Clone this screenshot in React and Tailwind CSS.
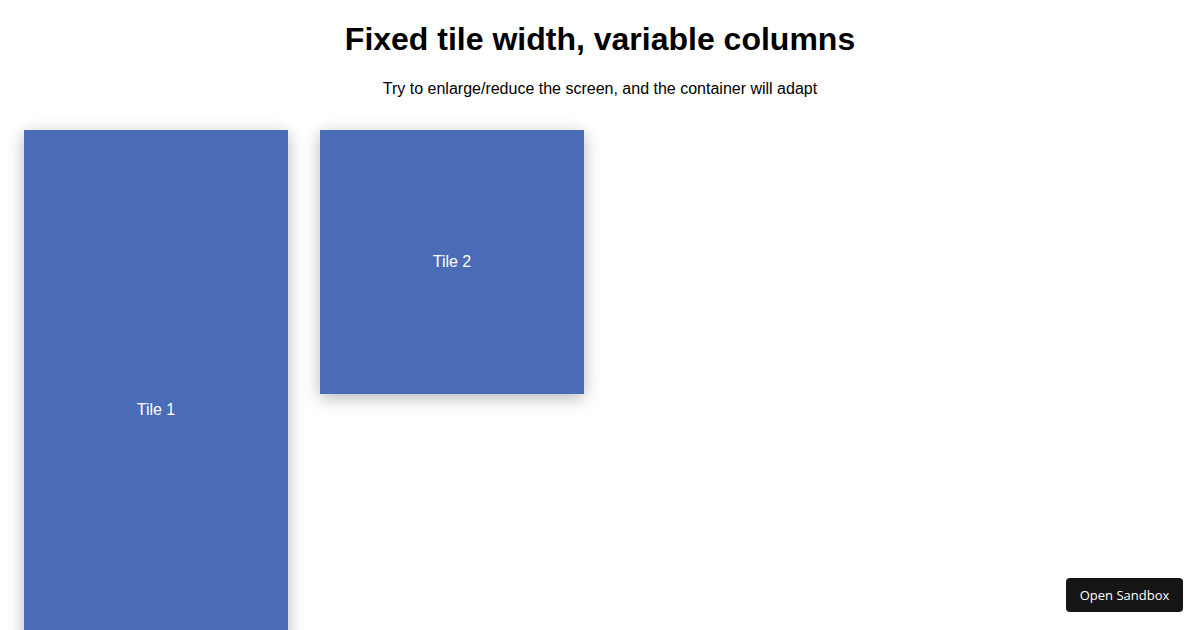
import React from 'react'

const tiles = [
    { name: 'Tile 1', height: 'h-[560px]' },
    { name: 'Tile 2', height: 'h-[264px]' },
]

const App = () => {
    return (
        <div className="relative h-[630px] overflow-hidden bg-white font-['Liberation_Sans',Arial,sans-serif] text-black">
            <h1 className="pt-[21px] text-center text-[32px] font-bold leading-[37px]">
                Fixed tile width, variable columns
            </h1>
            <p className="mt-[22px] text-center text-base leading-[18px]">
                Try to enlarge/reduce the screen, and the container will adapt
            </p>
            <div className="mt-[32px] flex items-start gap-8 px-6">
                {tiles.map((tile) => (
                    <div
                        key={tile.name}
                        className={`flex w-[264px] shrink-0 items-center justify-center bg-[#4a6bb5] text-base text-white shadow-[0_4px_16px_rgba(0,0,0,0.28)] ${tile.height}`}
                    >
                        {tile.name}
                    </div>
                ))}
            </div>
            <button className="absolute bottom-[18px] right-[17px] h-[34px] w-[117px] rounded-[4px] bg-[#151515] pt-[2px] font-['Open_Sans',sans-serif] text-[13px] font-medium text-white">
                Open Sandbox
            </button>
        </div>
    )
}

export default App
